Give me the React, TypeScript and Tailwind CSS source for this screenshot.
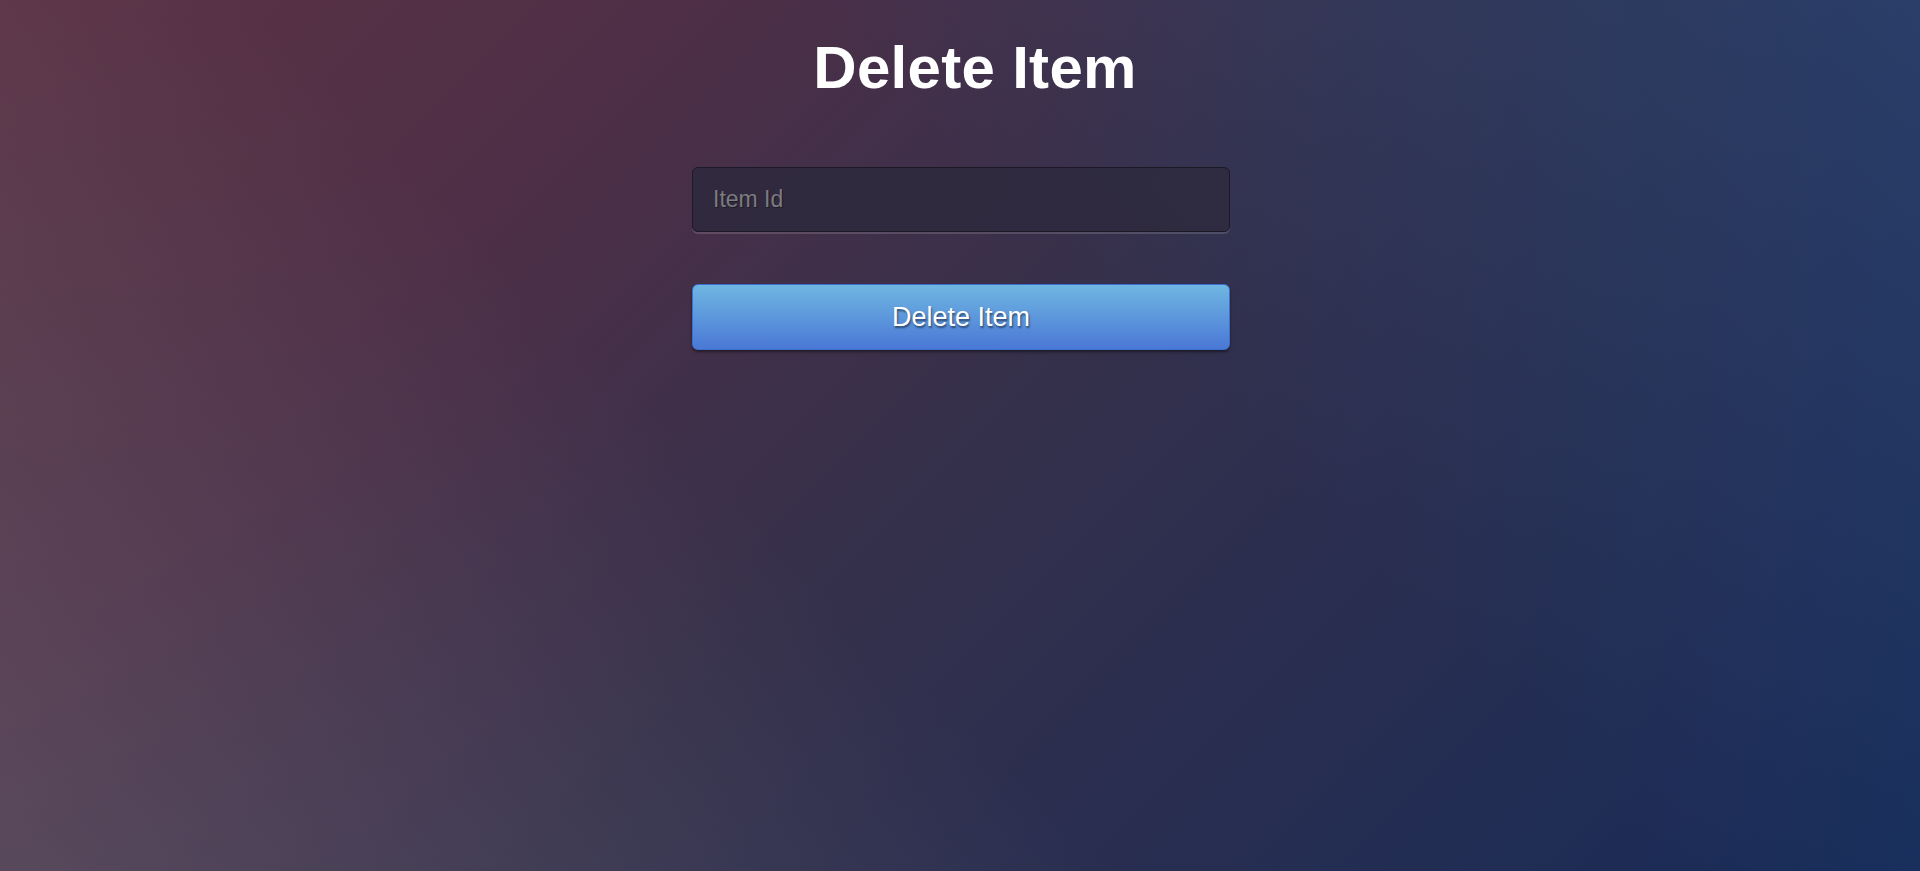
import { useState } from 'react'

export default function App() {
  const [itemId, setItemId] = useState('')

  return (
    <div className="min-h-[871px] w-full bg-[linear-gradient(45deg,rgba(120,120,130,0.35)_0%,rgba(90,90,110,0)_40%,rgba(40,70,130,0)_60%,rgba(40,85,140,0.4)_100%),linear-gradient(135deg,#5c3345_0%,#4e2f47_25%,#35304b_50%,#172b58_100%)] font-['Liberation_Sans',Arial,sans-serif]">
      <h1 className="pt-[34px] pl-[30px] text-center text-[60px] font-bold leading-[67px] tracking-[0.3px] text-white">
        Delete Item
      </h1>

      <form
        className="mx-auto mt-[66px] flex w-[538px] translate-x-[1px] flex-col gap-[52px]"
        onSubmit={(e) => e.preventDefault()}
      >
        <input
          type="text"
          value={itemId}
          onChange={(e) => setItemId(e.target.value)}
          placeholder="Item Id"
          className="h-[65px] w-full rounded-[6px] border border-[#1c1826] bg-[#2f2a3e]/90 px-5 text-[23px] text-[#d0d0d8] shadow-[0_2px_0_rgba(255,255,255,0.14)] outline-none placeholder:text-[#7c7b80] [text-shadow:1px_1px_1px_rgba(0,0,0,0.4)]"
        />

        <button
          type="submit"
          className="h-[66px] w-full rounded-[6px] border border-[#3d6fcf] bg-[linear-gradient(to_bottom,#6fb6e2,#4a78d6)] text-[27px] text-white shadow-[0_2px_3px_rgba(0,0,0,0.45)] [text-shadow:1px_2px_2px_rgba(0,0,0,0.5)]"
        >
          Delete Item
        </button>
      </form>
    </div>
  )
}
